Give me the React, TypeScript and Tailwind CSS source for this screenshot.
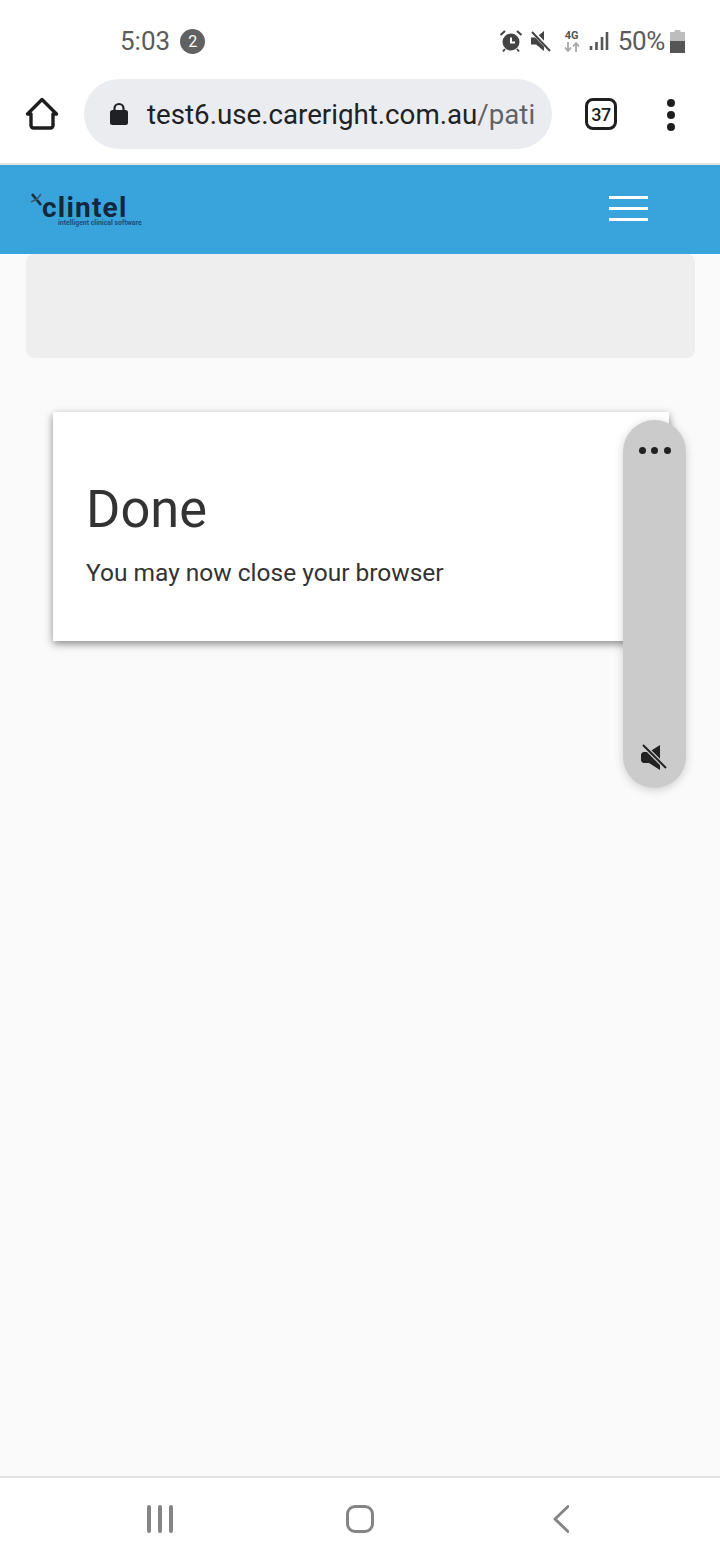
import React from 'react';

const StatusBar = () => (
  <div className="h-[79px] bg-white flex items-start justify-between pl-[120px] pr-[35px] pt-[25px] text-[#5b5b5b]">
    <div className="flex items-center gap-[10px]">
      <span className="text-[26px] leading-[32px]">5:03</span>
      <span className="w-[25px] h-[25px] rounded-full bg-[#616161] text-white text-[16px] leading-[25px] text-center">2</span>
    </div>
    <div className="flex items-center h-[32px]">
      {/* alarm */}
      <svg width="24" height="24" viewBox="0 0 24 24" className="mr-[7px]">
        <circle cx="12" cy="13" r="8.5" fill="#444" />
        <path d="M12 8.5V13.5H16" fill="none" stroke="#fff" strokeWidth="2" />
        <path d="M1.5 6L6 2M22.5 6L18 2M6 20l-2 2.5M18 20l2 2.5" stroke="#444" strokeWidth="2" fill="none" />
      </svg>
      {/* mute */}
      <svg width="22" height="24" viewBox="0 0 22 24" className="mr-[12px]">
        <path d="M1 8.5H6L14 2V22L6 15.5H1Z" fill="#444" />
        <path d="M2 2L21 22" stroke="#fff" strokeWidth="4" />
        <path d="M2 3L20 22" stroke="#444" strokeWidth="2" />
      </svg>
      {/* 4G */}
      <div className="flex flex-col items-center w-[16px] mr-[9px]">
        <span className="text-[11px] leading-[12px] font-bold text-[#555]">4G</span>
        <svg width="16" height="10" viewBox="0 0 16 10">
          <path d="M4 0V8M1 5.5L4 9L7 5.5M12 10V2M9 4.5L12 1L15 4.5" fill="none" stroke="#aaa" strokeWidth="1.8" />
        </svg>
      </div>
      {/* signal */}
      <svg width="20" height="22" viewBox="0 0 20 22" className="mr-[9px]">
        <path d="M2 16V20M7.5 12V20M13 7V20M18 2V20" stroke="#555" strokeWidth="2.6" />
      </svg>
      <span className="text-[26px] leading-[32px] mr-[5px] tracking-[-0.3px]">50%</span>
      <svg width="15" height="23" viewBox="0 0 15 23">
        <path d="M4.5 0H10.5V2H15V23H0V2H4.5Z" fill="#bdbdbd" />
        <rect x="0" y="11" width="15" height="12" fill="#555" />
      </svg>
    </div>
  </div>
);

const Toolbar = () => (
  <div className="h-[86px] bg-white flex items-start border-b-2 border-[#e4e4e4]">
    <svg width="34" height="34" viewBox="0 0 34 34" className="ml-[25px] mt-[18px] shrink-0">
      <path d="M2.5 17L17 2.5L31.5 17H28V28.5A2.5 2.5 0 0 1 25.5 31H8.5A2.5 2.5 0 0 1 6 28.5V17Z" fill="none" stroke="#1e1e1e" strokeWidth="3.4" strokeLinejoin="round" />
    </svg>
    <div className="ml-[25px] w-[468px] h-[70px] rounded-full bg-[#ebecf0] flex items-center pl-[26px] shrink-0 overflow-hidden">
      <svg width="18" height="24" viewBox="0 0 18 24" className="shrink-0">
        <path d="M4.5 9V6.5a4.5 4.5 0 0 1 9 0V9" fill="none" stroke="#202124" strokeWidth="2.2" />
        <rect x="0" y="8" width="18" height="15" rx="2.5" fill="#202124" />
      </svg>
      <div className="ml-[19px] pt-[2px] whitespace-nowrap text-[27.7px] leading-[36px] text-[#202124]">
        test6.use.careright.com.au<span className="text-[#5f6368]">/pati</span>
      </div>
    </div>
    <div className="ml-[33px] mt-[19px] w-[32px] h-[32px] rounded-[8px] border-[3.5px] border-[#1e1e1e] flex items-center justify-center text-[18px] font-medium text-[#1e1e1e] shrink-0 tracking-[-0.5px]">
      37
    </div>
    <div className="ml-[50px] mt-[20px] flex flex-col gap-[4px] shrink-0">
      <span className="w-[8px] h-[8px] rounded-full bg-[#1e1e1e]" />
      <span className="w-[8px] h-[8px] rounded-full bg-[#1e1e1e]" />
      <span className="w-[8px] h-[8px] rounded-full bg-[#1e1e1e]" />
    </div>
  </div>
);

const Header = () => (
  <div className="h-[89px] bg-[#39a3dc] flex items-start justify-between pl-[30px] pr-[72px]">
    <div className="relative w-[114px] h-[89px]">
      {/* insect mark of the logo */}
      <svg width="14" height="20" viewBox="0 0 14 20" className="absolute left-0 top-[27px]">
        <path d="M2 2L11 13" stroke="#1b2c3a" strokeWidth="2.6" fill="none" />
        <path d="M1 10L7 7L11 2" stroke="#3d5a70" strokeWidth="1.6" fill="none" />
      </svg>
      <span className="absolute left-[12px] top-[33px] text-[28px] leading-[20px] font-bold text-[#12293d] tracking-[1.2px]">clintel</span>
      <span className="absolute left-[28px] top-[55px] text-[6.9px] leading-[7px] font-bold whitespace-nowrap text-[#1c4f78]">intelligent clinical software</span>
    </div>
    <div className="mt-[31px] w-[39px] flex flex-col gap-[8px]">
      <span className="h-[3px] bg-white" />
      <span className="h-[3px] bg-white" />
      <span className="h-[3px] bg-white" />
    </div>
  </div>
);

const NavBar = () => (
  <div className="h-[84px] bg-white border-t-2 border-[#e2e2e2] flex items-start pl-[147px] pt-[27px]">
    <div className="flex gap-[7px]">
      <span className="w-[4px] h-[28px] rounded-sm bg-[#858585]" />
      <span className="w-[4px] h-[28px] rounded-sm bg-[#858585]" />
      <span className="w-[4px] h-[28px] rounded-sm bg-[#858585]" />
    </div>
    <div className="ml-[173px] w-[28px] h-[28px] rounded-[9px] border-[3px] border-[#858585]" />
    <svg width="16" height="28" viewBox="0 0 16 28" className="ml-[179px]">
      <path d="M15 1.5L2 14L15 26.5" fill="none" stroke="#858585" strokeWidth="3" strokeLinecap="round" strokeLinejoin="round" />
    </svg>
  </div>
);

const App: React.FC = () => {
  return (
    <div className="w-[720px] h-[1560px] flex flex-col bg-[#fafafa] font-['Roboto',sans-serif] overflow-hidden">
      <StatusBar />
      <Toolbar />
      <Header />

      <main className="relative flex-1 px-[26px] min-h-0">
        {/* empty grey banner */}
        <div className="h-[104px] w-[669px] rounded-[8px] bg-[#eeeeee]" />

        {/* Done card */}
        <div className="ml-[27px] mt-[54px] w-[616px] h-[229px] bg-white shadow-[0_3px_8px_rgba(0,0,0,0.45)] pl-[33px] pt-[66px]">
          <h1 className="text-[52.4px] leading-[62px] text-[#333333] font-normal">Done</h1>
          <p className="mt-[18px] text-[24.5px] leading-[30px] text-[#333333]">You may now close your browser</p>
        </div>

        {/* floating pill */}
        <div className="absolute left-[623px] top-[166px] w-[63px] h-[368px] rounded-full bg-[#cbcbcb] shadow-[0_2px_10px_rgba(0,0,0,0.18)] flex flex-col items-center justify-between pt-[27px] pb-[16px]">
          <div className="flex gap-[5.5px]">
            <span className="w-[7px] h-[7px] rounded-full bg-[#222222]" />
            <span className="w-[7px] h-[7px] rounded-full bg-[#222222]" />
            <span className="w-[7px] h-[7px] rounded-full bg-[#222222]" />
          </div>
          <svg width="28" height="28" viewBox="0 0 28 28" className="mr-[1px]">
            <path d="M1 10L3 8H9L20 1V26L9 19H3L1 17Z" fill="#222222" />
            <path d="M3 1L26 24" stroke="#cbcbcb" strokeWidth="4.5" />
            <path d="M3 1L26 24" stroke="#222222" strokeWidth="2" />
          </svg>
        </div>
      </main>

      <NavBar />
    </div>
  );
};

export default App;
